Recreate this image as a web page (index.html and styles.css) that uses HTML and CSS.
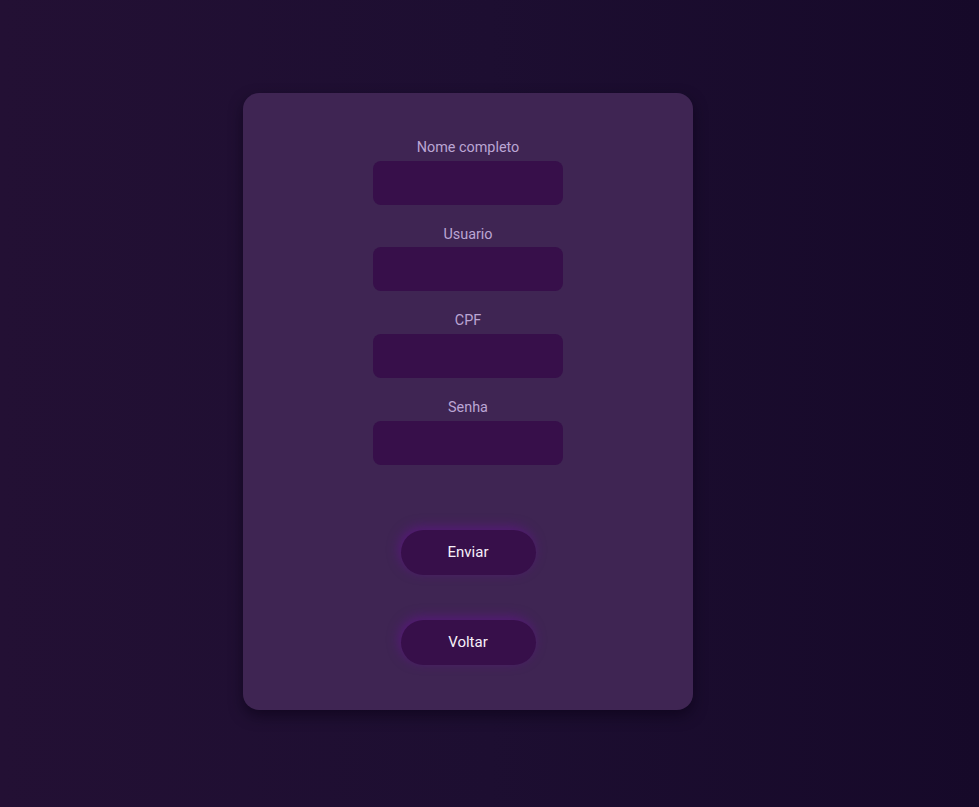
FILE: index.html
```html
<!DOCTYPE html>
<html lang="pt">
<head>
<meta charset="utf-8">
<title>Cadastro</title>
<link rel="stylesheet" href="styles.css">
</head>
<body>
<main class="page">
  <form class="card">
    <div class="fields">
      <label class="field">
        <span class="label">Nome completo</span>
        <input class="input" type="text">
      </label>
      <label class="field">
        <span class="label">Usuario</span>
        <input class="input" type="text">
      </label>
      <label class="field">
        <span class="label">CPF</span>
        <input class="input" type="text">
      </label>
      <label class="field">
        <span class="label">Senha</span>
        <input class="input" type="password">
      </label>
    </div>
    <div class="actions">
      <button class="btn" type="button">Enviar</button>
      <button class="btn" type="button">Voltar</button>
    </div>
  </form>
</main>
</body>
</html>
```
FILE: styles.css
```css
html, body {
  margin: 0;
  height: 100%;
}
body {
  background: linear-gradient(90deg, #231034 0%, #1d0e31 50%, #160929 100%);
  font-family: Roboto, "Noto Sans", sans-serif;
}
.page {
  display: flex;
  justify-content: center;
  align-items: flex-start;
  padding: 93px 43px 0 0;
  box-sizing: border-box;
  min-height: 100%;
}
.card {
  width: 450px;
  height: 617px;
  box-sizing: border-box;
  background: #3f2553;
  border-radius: 16px;
  box-shadow: 0 6px 14px rgba(10, 2, 20, 0.55);
  padding: 45px 0 45px;
  display: flex;
  flex-direction: column;
  align-items: center;
}
.fields {
  display: flex;
  flex-direction: column;
  gap: 20px;
  align-items: center;
}
.field {
  display: flex;
  flex-direction: column;
  align-items: center;
  gap: 2px;
}
.label {
  color: #bba5d4;
  font-size: 14.4px;
  line-height: 20.67px;
}
.input {
  width: 190px;
  height: 44px;
  box-sizing: border-box;
  border: none;
  border-radius: 8px;
  background: #370f4a;
  outline: none;
  padding: 0 10px;
  color: #fff;
}
.actions {
  margin-top: 65px;
  display: flex;
  flex-direction: column;
  align-items: center;
  gap: 45px;
}
.btn {
  width: 135px;
  height: 45px;
  border: none;
  border-radius: 23px;
  background: #370f4a;
  color: #f6eff9;
  font-family: Roboto, "Noto Sans", sans-serif;
  font-size: 15px;
  box-shadow: -2px -3px 12px rgba(95, 20, 135, 0.7);
  cursor: pointer;
}
```
